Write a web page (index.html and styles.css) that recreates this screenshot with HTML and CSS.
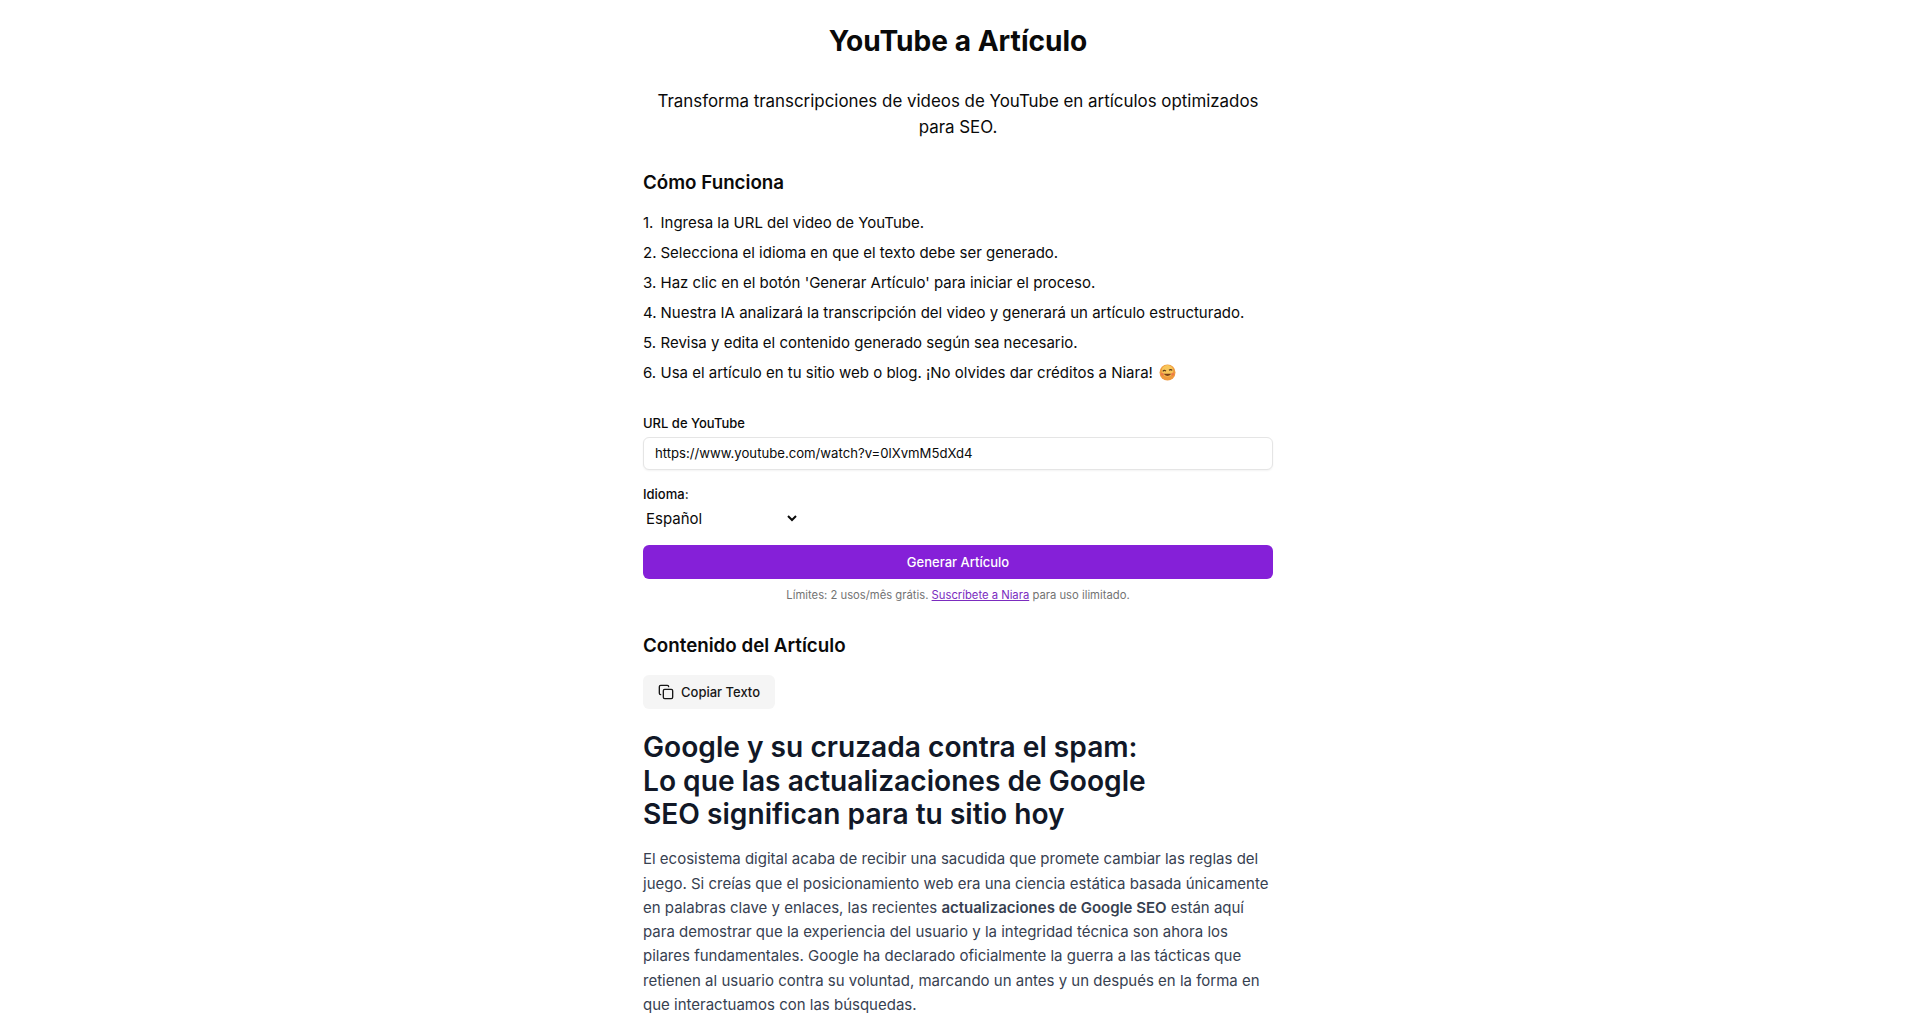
FILE: index.html
```html
<!DOCTYPE html>
<html lang="es">
<head>
<meta charset="utf-8">
<title>YouTube a Artículo</title>
<link rel="stylesheet" href="styles.css">
</head>
<body>
<main class="page">
  <h1 class="title">YouTube a Artículo</h1>
  <p class="subtitle">Transforma transcripciones de videos de YouTube en artículos optimizados para SEO.</p>

  <section class="how">
    <h2 class="section-title">Cómo Funciona</h2>
    <ol class="steps">
      <li><span class="num">1.</span>Ingresa la URL del video de YouTube.</li>
      <li><span class="num">2.</span>Selecciona el idioma en que el texto debe ser generado.</li>
      <li><span class="num">3.</span>Haz clic en el botón 'Generar Artículo' para iniciar el proceso.</li>
      <li><span class="num">4.</span>Nuestra IA analizará la transcripción del video y generará un artículo estructurado.</li>
      <li><span class="num">5.</span>Revisa y edita el contenido generado según sea necesario.</li>
      <li><span class="num">6.</span>Usa el artículo en tu sitio web o blog. ¡No olvides dar créditos a Niara!
        <svg class="emoji" viewBox="0 0 20 20" aria-hidden="true">
          <circle cx="10" cy="10" r="9.4" fill="#ee9a3e"/>
          <circle cx="10" cy="8" r="6.8" fill="#f8c65a"/>
          <path d="M4.4 8.6q1.8-2 3.8-.2" fill="none" stroke="#5b3a1a" stroke-width="1.4"/>
          <path d="M11.8 7.4q2-1.8 3.8.2" fill="none" stroke="#5b3a1a" stroke-width="1.4"/>
          <path d="M5.4 11.4q4.6 5.6 9.2 0z" fill="#7a3f16"/>
          <circle cx="4" cy="12" r="1.7" fill="#ec6f4a" opacity=".75"/>
          <circle cx="16" cy="12" r="1.7" fill="#ec6f4a" opacity=".75"/>
        </svg>
      </li>
    </ol>
  </section>

  <form class="form">
    <label class="label" for="url">URL de YouTube</label>
    <input class="url-input" id="url" type="text" value="https://www.youtube.com/watch?v=0lXvmM5dXd4">
    <label class="label lang-label" for="lang">Idioma:</label>
    <select class="lang" id="lang"><option>Español</option></select>
    <button class="generate" type="button">Generar Artículo</button>
    <p class="limits">Límites: 2 usos/mês grátis. <a href="#">Suscríbete a Niara</a> para uso ilimitado.</p>
  </form>

  <section class="result">
    <h2 class="section-title">Contenido del Artículo</h2>
    <button class="copy" type="button">
      <svg class="copy-icon" viewBox="0 0 24 24" aria-hidden="true"><rect x="8" y="8" width="14" height="14" rx="2"/><path d="M4 16c-1.1 0-2-.9-2-2V4c0-1.1.9-2 2-2h10c1.1 0 2 .9 2 2"/></svg>
      <span>Copiar Texto</span>
    </button>
    <article class="article">
      <h1 class="article-title">Google y su cruzada contra el spam:<br>Lo que las actualizaciones de Google<br>SEO significan para tu sitio hoy</h1>
      <p class="article-text">El ecosistema digital acaba de recibir una sacudida que promete cambiar las reglas del juego. Si creías que el posicionamiento web era una ciencia estática basada únicamente en palabras clave y enlaces, las recientes <strong>actualizaciones de Google SEO</strong> están aquí para demostrar que la experiencia del usuario y la integridad técnica son ahora los pilares fundamentales. Google ha declarado oficialmente la guerra a las tácticas que retienen al usuario contra su voluntad, marcando un antes y un después en la forma en que interactuamos con las búsquedas.</p>
    </article>
  </section>
</main>
</body>
</html>
```

FILE: styles.css
```css
* { box-sizing: border-box; }
html, body { margin: 0; background: #fff; }
body { font-family: Inter, "Liberation Sans", sans-serif; color: #0a0a0a; overflow: hidden; height: 1029px; }
.page { width: 632px; margin: 0 auto; padding: 23px 2px 0 0; }
.title { margin: 0; font-size: 28.1px; line-height: 36px; font-weight: 700; text-align: center; }
.subtitle { margin: 29px 0 0; padding: 0 8px; font-size: 16.9px; line-height: 26px; text-align: center; }
.how { margin-top: 29px; }
.section-title { margin: 0; font-size: 18.75px; line-height: 28px; font-weight: 600; }
.steps { list-style: none; margin: 11px 0 0; padding: 0; font-size: 15px; line-height: 30px; }
.steps li { height: 30px; }
.num { display: inline-block; width: 17.5px; }
.emoji { width: 17px; height: 17px; vertical-align: -3px; margin-left: 2px; }
.form { margin-top: 25px; display: flex; flex-direction: column; }
.label { font-size: 13px; line-height: 20px; font-weight: 500; }
.url-input { margin-top: 4px; height: 33px; width: 100%; padding: 0 11px 1px; border: 1px solid #e5e5e5; border-radius: 6px; font: 400 13.15px Inter, sans-serif; color: #0a0a0a; box-shadow: 0 1px 2px rgba(0,0,0,.05); background: #fff; outline: none; }
.lang-label { margin-top: 14px; }
.lang { margin: 2px 0 0 -1px; width: 158px; height: 24px; border: 0; background: transparent; font: 400 15px Inter, sans-serif; color: #0a0a0a; padding: 0; outline: none; }
.generate { margin-top: 15px; height: 34px; border: 0; border-radius: 6px; background: #8520d8; color: #fff; font: 500 13px Inter, sans-serif; }
.limits { margin: 8px 0 0; font-size: 11.25px; line-height: 16px; text-align: center; color: #737373; }
.limits a { color: #7b2cbf; text-decoration: underline; }
.result { margin-top: 29px; }
.copy { margin-top: 15px; height: 34px; width: 132px; display: flex; align-items: center; gap: 7px; padding: 0 15px; border: 0; border-radius: 6px; background: #f5f5f5; font: 500 13px Inter, sans-serif; color: #171717; white-space: nowrap; }
.copy-icon { width: 16px; height: 16px; fill: none; stroke: currentColor; stroke-width: 2; stroke-linecap: round; stroke-linejoin: round; flex: none; }
.article-title { margin: 22px 0 0; font-size: 28.13px; line-height: 33.6px; font-weight: 600; color: #111827; }
.article-text { margin: 15.5px 0 0; font-size: 15px; line-height: 24.3px; color: #374151; }
.article-text strong { font-weight: 600; }
```
